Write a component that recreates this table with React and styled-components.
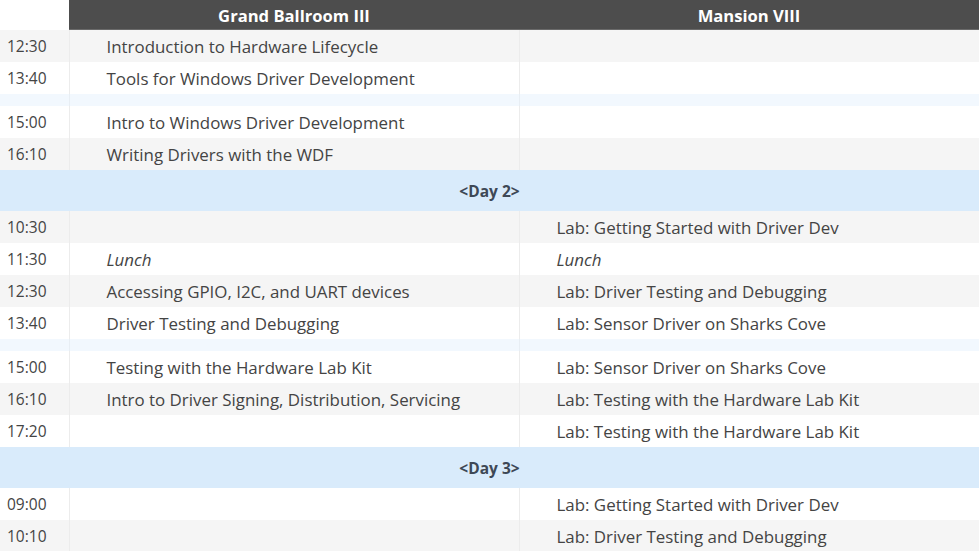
import React from 'react';
import styled, { createGlobalStyle } from 'styled-components';

const GlobalStyle = createGlobalStyle`
  html, body {
    margin: 0;
    padding: 0;
    background: #fff;
  }
  body {
    font-family: "Open Sans", "Noto Sans", sans-serif;
    color: #444;
  }
`;

const schedule = [
  { time: '12:30', grand: 'Introduction to Hardware Lifecycle' },
  { time: '13:40', grand: 'Tools for Windows Driver Development' },
  { spacer: true },
  { time: '15:00', grand: 'Intro to Windows Driver Development' },
  { time: '16:10', grand: 'Writing Drivers with the WDF' },
  { day: '<Day 2>' },
  { time: '10:30', mansion: 'Lab: Getting Started with Driver Dev' },
  { time: '11:30', grand: 'Lunch', mansion: 'Lunch', lunch: true },
  { time: '12:30', grand: 'Accessing GPIO, I2C, and UART devices', mansion: 'Lab: Driver Testing and Debugging' },
  { time: '13:40', grand: 'Driver Testing and Debugging', mansion: 'Lab: Sensor Driver on Sharks Cove' },
  { spacer: true },
  { time: '15:00', grand: 'Testing with the Hardware Lab Kit', mansion: 'Lab: Sensor Driver on Sharks Cove' },
  { time: '16:10', grand: 'Intro to Driver Signing, Distribution, Servicing', mansion: 'Lab: Testing with the Hardware Lab Kit' },
  { time: '17:20', mansion: 'Lab: Testing with the Hardware Lab Kit' },
  { day: '<Day 3>' },
  { time: '09:00', mansion: 'Lab: Getting Started with Driver Dev' },
  { time: '10:10', mansion: 'Lab: Driver Testing and Debugging' },
];

const App = () => {
  return (
    <>
      <GlobalStyle />
      <Table>
        <colgroup>
          <col style={{ width: 69 }} />
          <col style={{ width: 450 }} />
          <col />
        </colgroup>
        <thead>
          <tr>
            <Corner />
            <RoomHead>Grand Ballroom III</RoomHead>
            <RoomHead>Mansion VIII</RoomHead>
          </tr>
        </thead>
        <tbody>
          {schedule.map((row, i) => {
            if (row.spacer) {
              return (
                <Spacer key={i}>
                  <td />
                  <td />
                  <td />
                </Spacer>
              );
            }
            if (row.day) {
              return (
                <DayRow key={i}>
                  <td colSpan={3}>{row.day}</td>
                </DayRow>
              );
            }
            return (
              <Row key={i}>
                <Time>{row.time}</Time>
                <Session $italic={row.lunch}>{row.grand}</Session>
                <Session $italic={row.lunch}>{row.mansion}</Session>
              </Row>
            );
          })}
        </tbody>
      </Table>
    </>
  );
};

const Table = styled.table`
  width: 979px;
  border-collapse: collapse;
  table-layout: fixed;
`;

const Corner = styled.th`
  background: #fff;
  height: 30px;
  padding: 0;
`;

const RoomHead = styled.th`
  background: #4d4d4d;
  color: #fff;
  font-size: 16.6px;
  font-weight: 700;
  height: 30px;
  padding: 0;
  text-align: center;
  box-shadow: inset 0 -1px 0 #6a6a6a;
`;

const Row = styled.tr`
  height: 32px;
  &:nth-child(odd) {
    background: #f5f5f5;
  }
  td + td {
    border-left: 1px solid #ececec;
  }
`;

const Time = styled.td`
  padding: 0 0 0 7px;
  font-size: 15.5px;
  color: #444;
  white-space: nowrap;
`;

const Session = styled.td`
  padding: 0 0 0 37px;
  font-size: 16.9px;
  color: #444;
  white-space: nowrap;
  font-style: ${(p) => (p.$italic ? 'italic' : 'normal')};
`;

const Spacer = styled.tr`
  height: 12px;
  background: #f2f8fe;
  td {
    padding: 0;
  }
  td + td {
    border-left: 1px solid #e8eef4;
  }
`;

const DayRow = styled.tr`
  height: 41px;
  background: #d9ebfb;
  td {
    padding: 0;
    text-align: center;
    font-size: 15.5px;
    font-weight: 700;
    color: #3e4856;
  }
`;

export default App;
